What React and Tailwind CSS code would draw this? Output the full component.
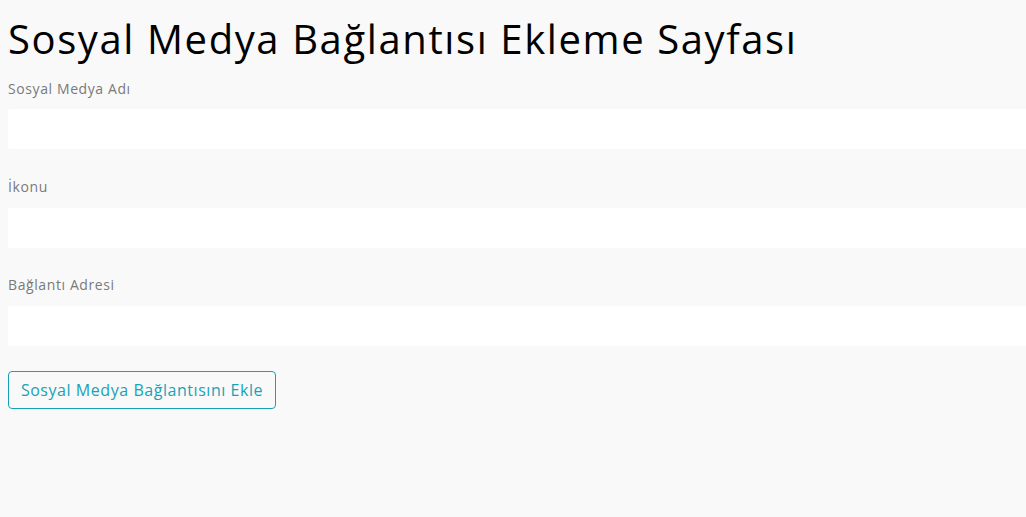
export default function App() {
  const font = { fontFamily: '"Open Sans", "Noto Sans", sans-serif' };
  return (
    <div className="min-h-[517px] w-full bg-[#f9f9f9] overflow-hidden" style={font}>
      <div className="pl-2">
        <h1 className="pt-[15px] text-[40px] leading-[48px] text-black font-normal tracking-[1.6px]">
          Sosyal Medya Bağlantısı Ekleme Sayfası
        </h1>
        <div className="mt-[16px]">
          <label className="block text-[14px] leading-[20px] text-[#7a7a7a] tracking-[0.6px]">Sosyal Medya Adı</label>
          <div className="mt-[10px] h-[40px] w-[calc(100%+20px)] rounded-[3px] bg-white"></div>
        </div>
        <div className="mt-[28px]">
          <label className="block text-[14px] leading-[20px] text-[#7a7a7a] tracking-[0.6px]">İkonu</label>
          <div className="mt-[11px] h-[40px] w-[calc(100%+20px)] rounded-[3px] bg-white"></div>
        </div>
        <div className="mt-[27px]">
          <label className="block text-[14px] leading-[20px] text-[#7a7a7a] tracking-[0.6px]">Bağlantı Adresi</label>
          <div className="mt-[11px] h-[40px] w-[calc(100%+20px)] rounded-[3px] bg-white"></div>
        </div>
        <button className="mt-[25px] h-[38px] w-[268px] rounded-[4px] border border-[#17a2b8] text-[16px] text-[#17a2b8] bg-transparent tracking-[0.55px]">
          Sosyal Medya Bağlantısını Ekle
        </button>
      </div>
    </div>
  );
}
